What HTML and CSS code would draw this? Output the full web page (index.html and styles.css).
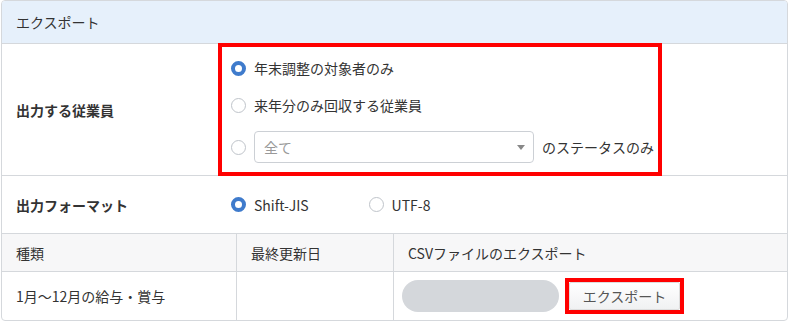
FILE: index.html
```html
<!DOCTYPE html>
<html lang="ja">
  <head>
    <meta charset="UTF-8" />
    <title>エクスポート</title>
    <link rel="stylesheet" href="styles.css">
  </head>
  <body>
    <div class="panel">
      <div class="panel-head">エクスポート</div>

      <div class="form-row row-employees">
        <div class="form-label">出力する従業員</div>
        <div class="highlight options">
          <label class="option"><span class="radio checked"></span>年末調整の対象者のみ</label>
          <label class="option"><span class="radio"></span>来年分のみ回収する従業員</label>
          <label class="option">
            <span class="radio"></span>
            <span class="select">全て<span class="caret"></span></span>
            <span class="suffix">のステータスのみ</span>
          </label>
        </div>
      </div>

      <div class="form-row row-format">
        <div class="form-label">出力フォーマット</div>
        <div class="format-options">
          <label class="option"><span class="radio checked"></span>Shift-JIS</label>
          <label class="option"><span class="radio"></span>UTF-8</label>
        </div>
      </div>

      <div class="export-table">
        <div class="th">種類</div>
        <div class="th">最終更新日</div>
        <div class="th">CSVファイルのエクスポート</div>
        <div class="td">1月〜12月の給与・賞与</div>
        <div class="td"></div>
        <div class="td action-cell">
          <span class="progress"></span>
          <span class="highlight btn-frame"><button class="btn">エクスポート</button></span>
        </div>
      </div>
    </div>
  </body>
</html>
```

FILE: styles.css
```css
/* CSS Styles */
body {
  margin: 0;
  font-family: "Noto Sans CJK JP", "Noto Sans", sans-serif;
  font-size: 14px;
  color: #333;
  background: #fff;
}

.panel {
  margin-left: 1px;
  width: 785px;
  height: 319px;
  border: 1px solid #d5d8dc;
  border-radius: 4px;
  overflow: hidden;
}

.panel-head {
  height: 42px;
  line-height: 42px;
  padding-left: 14px;
  background-color: #e6f0fb;
  border-bottom: 1px solid #d5d8dc;
}

.form-row {
  display: flex;
  align-items: center;
  border-bottom: 1px solid #d5d8dc;
}

.form-label {
  width: 202px;
  padding-left: 14px;
  font-weight: bold;
}

.row-employees {
  height: 131px;
}

.highlight {
  border: 4px solid #f00;
}

.options {
  box-sizing: border-box;
  width: 444px;
  height: 133px;
  margin: -1px 0;
  padding: 7px 0 0 9px;
  display: flex;
  flex-direction: column;
}

.option {
  display: flex;
  align-items: center;
  flex-shrink: 0;
  height: 28px;
  white-space: nowrap;
}

.options .option + .option {
  margin-top: 9px;
}

.options .option:last-child {
  height: 32px;
  margin-top: 12px;
}

.radio {
  box-sizing: border-box;
  width: 15px;
  height: 15px;
  margin-right: 8px;
  border: 1px solid #bfc4ca;
  border-radius: 50%;
  background: #fff;
}

.radio.checked {
  border: 4px solid #3f7bcc;
  background: #fff;
}

.select {
  position: relative;
  box-sizing: border-box;
  width: 280px;
  height: 32px;
  line-height: 30px;
  padding-left: 9px;
  border: 1px solid #ccd0d5;
  border-radius: 4px;
  color: #999;
}

.caret {
  position: absolute;
  right: 8px;
  top: 13px;
  border-left: 4px solid transparent;
  border-right: 4px solid transparent;
  border-top: 5px solid #888;
}

.suffix {
  margin-left: 8px;
}

.row-format {
  height: 57px;
}

.format-options {
  display: flex;
  padding-left: 13px;
}

.format-options .option {
  margin-right: 60px;
}

.export-table {
  display: grid;
  grid-template-columns: 235px 157px 1fr;
}

.th,
.td {
  display: flex;
  align-items: center;
  padding-left: 14px;
  border-right: 1px solid #d5d8dc;
}

.th:nth-child(3n),
.td:nth-child(3n) {
  border-right: none;
}

.th {
  height: 37px;
  background-color: #f7f7f8;
  border-bottom: 1px solid #d5d8dc;
}

.td {
  height: 48px;
}

.action-cell {
  padding-left: 8px;
}

.progress {
  width: 157px;
  height: 32px;
  border-radius: 16px;
  background-color: #d4d7db;
}

.btn-frame {
  display: inline-flex;
  margin-left: 6px;
}

.btn {
  width: 111px;
  height: 28px;
  border: 1px solid #ddd;
  border-radius: 2px;
  background: linear-gradient(#fff, #f0f1f2);
  font-family: inherit;
  font-size: 14px;
  color: #555;
  padding: 0;
}
```
